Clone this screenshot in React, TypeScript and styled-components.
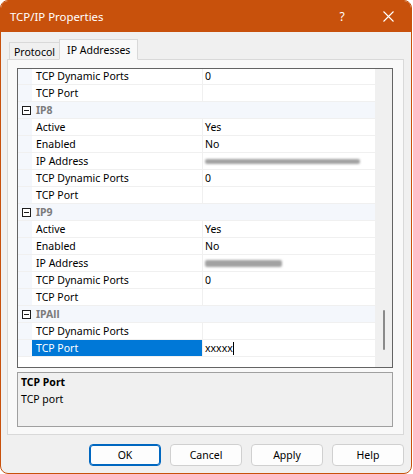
import React from "react"
import styled, { createGlobalStyle } from "styled-components"

const GlobalStyle = createGlobalStyle`
  html, body {
    margin: 0;
    padding: 0;
    background: #ffffff;
  }
  * {
    box-sizing: border-box;
  }
`

const FONT = `"Noto Sans", "Open Sans", "Liberation Sans", sans-serif`

const Window = styled.div`
  width: 412px;
  height: 474px;
  border: 1px solid #c8510c;
  border-radius: 8px;
  background: #f0f0f0;
  display: flex;
  flex-direction: column;
  overflow: hidden;
  font-family: ${FONT};
  font-size: 10.5px;
  color: #000;
`

const TitleBar = styled.div`
  height: 31px;
  flex: none;
  background: #c8510c;
  color: #fff;
  display: flex;
  align-items: center;
  padding-left: 9px;
`

const Title = styled.span`
  flex: 1;
  font-size: 11.4px;
`

const TitleButton = styled.div`
  width: 46px;
  height: 31px;
  display: flex;
  align-items: center;
  justify-content: center;
  font-size: 12px;
`

const Body = styled.div`
  flex: 1;
  display: flex;
  flex-direction: column;
  padding: 7px 7px 0 6px;
`

const TabStrip = styled.div`
  height: 21px;
  display: flex;
  align-items: flex-end;
  padding-left: 2px;
  margin-bottom: -1px;
  position: relative;
  z-index: 1;
`

const Tab = styled.div<{ $active?: boolean }>`
  height: ${p => (p.$active ? "21px" : "17px")};
  margin-bottom: ${p => (p.$active ? "0" : "1px")};
  padding: 0 ${p => (p.$active ? "7px" : "4px")};
  border: 1px solid #d9d9d9;
  border-bottom: ${p => (p.$active ? "1px solid #f9f9f9" : "none")};
  margin-left: ${p => (p.$active ? "-1px" : "0")};
  background: ${p => (p.$active ? "#f9f9f9" : "#f0f0f0")};
  display: flex;
  align-items: center;
  padding-top: ${p => (p.$active ? "0" : "1px")};
`

const Panel = styled.div`
  width: 397px;
  height: 376px;
  border: 1px solid #d9d9d9;
  background: #f9f9f9;
  padding: 8px 10px 0 9px;
  display: flex;
  flex-direction: column;
  gap: 4px;
`

const Grid = styled.div`
  width: 376px;
  height: 300px;
  border: 1px solid #646464;
  background: #fff;
  display: flex;
  overflow: hidden;
`

const Rows = styled.div`
  width: 357px;
  margin-top: -1px;
  display: flex;
  flex-direction: column;
`

const Row = styled.div`
  height: 17px;
  flex: none;
  display: flex;
  border-bottom: 1px solid #f0f0f0;
`

const Gutter = styled.div`
  width: 14px;
  flex: none;
  background: #f4f7fc;
`

const NameCell = styled.div<{ $selected?: boolean }>`
  width: 171px;
  flex: none;
  padding-left: 4px;
  line-height: 16px;
  white-space: nowrap;
  background: ${p => (p.$selected ? "#0078d7" : "#fff")};
  color: ${p => (p.$selected ? "#fff" : "#000")};
  border-right: 1px solid #f0f0f0;
`

const ValueCell = styled.div`
  flex: 1;
  padding-left: 2px;
  line-height: 16px;
  white-space: nowrap;
  display: flex;
  align-items: center;
`

const CategoryRow = styled.div`
  height: 17px;
  flex: none;
  display: flex;
  align-items: center;
  background: #f4f7fc;
  border-bottom: 1px solid #f0f0f0;
`

const Toggle = styled.div`
  width: 14px;
  display: flex;
  justify-content: center;
  padding-left: 2px;
`

const CategoryName = styled.span`
  padding-left: 4px;
  font-weight: 700;
  color: #7c7c7c;
  line-height: 16px;
`

const Redacted = styled.div<{ $w: number; $h: number }>`
  width: ${p => p.$w}px;
  height: ${p => p.$h}px;
  margin-top: 1px;
  background: #a2a2a2;
  border-radius: 2px;
  filter: blur(0.8px);
`

const Editing = styled.span`
  display: inline-flex;
  align-items: center;
`

const Caret = styled.span`
  display: inline-block;
  width: 1px;
  height: 13px;
  background: #000;
`

const ScrollTrack = styled.div`
  width: 17px;
  flex: none;
  background: #f0f0f0;
  display: flex;
  justify-content: center;
  padding-top: 241px;
`

const ScrollThumb = styled.div`
  width: 2px;
  height: 40px;
  background: #8b8b8b;
  border-radius: 1px;
`

const Description = styled.div`
  width: 376px;
  height: 55px;
  border: 1px solid #a0a0a0;
  background: #f0f0f0;
  padding: 1px 3px;
  line-height: 17px;
`

const DescTitle = styled.div`
  font-weight: 700;
`

const ButtonBar = styled.div`
  display: flex;
  justify-content: flex-end;
  gap: 9px;
  padding-top: 9px;
`

const Button = styled.button<{ $default?: boolean }>`
  width: 72px;
  height: 22px;
  font-family: ${FONT};
  font-size: 10.5px;
  color: #000;
  background: #fdfdfd;
  border: 1px solid ${p => (p.$default ? "#0067c0" : "#d0d0d0")};
  box-shadow: ${p => (p.$default ? "inset 0 0 0 1px #0067c0" : "none")};
  border-radius: 4px;
  padding: 0;
`

type Item =
  | { kind: "cat"; name: string }
  | { kind: "prop"; name: string; value?: string; redact?: [number, number]; selected?: boolean }

const items: Item[] = [
  { kind: "prop", name: "TCP Dynamic Ports", value: "0" },
  { kind: "prop", name: "TCP Port" },
  { kind: "cat", name: "IP8" },
  { kind: "prop", name: "Active", value: "Yes" },
  { kind: "prop", name: "Enabled", value: "No" },
  { kind: "prop", name: "IP Address", redact: [155, 5] },
  { kind: "prop", name: "TCP Dynamic Ports", value: "0" },
  { kind: "prop", name: "TCP Port" },
  { kind: "cat", name: "IP9" },
  { kind: "prop", name: "Active", value: "Yes" },
  { kind: "prop", name: "Enabled", value: "No" },
  { kind: "prop", name: "IP Address", redact: [77, 7] },
  { kind: "prop", name: "TCP Dynamic Ports", value: "0" },
  { kind: "prop", name: "TCP Port" },
  { kind: "cat", name: "IPAll" },
  { kind: "prop", name: "TCP Dynamic Ports" },
  { kind: "prop", name: "TCP Port", selected: true },
]

const MinusBox = () => (
  <svg width="9" height="9" viewBox="0 0 9 9">
    <rect x="0.5" y="0.5" width="8" height="8" fill="#fff" stroke="#1e1e1e" />
    <line x1="2" y1="4.5" x2="7" y2="4.5" stroke="#1e1e1e" />
  </svg>
)

const CloseIcon = () => (
  <svg width="11" height="11" viewBox="0 0 11 11">
    <path d="M0.5 0.5 L10.5 10.5 M10.5 0.5 L0.5 10.5" stroke="#fff" strokeWidth="1.1" />
  </svg>
)

const App = () => {
  return (
    <>
      <GlobalStyle />
      <Window>
        <TitleBar>
          <Title>TCP/IP Properties</Title>
          <TitleButton>?</TitleButton>
          <TitleButton>
            <CloseIcon />
          </TitleButton>
        </TitleBar>
        <Body>
          <TabStrip>
            <Tab>Protocol</Tab>
            <Tab $active>IP Addresses</Tab>
          </TabStrip>
          <Panel>
            <Grid>
              <Rows>
                {items.map((item, i) =>
                  item.kind === "cat" ? (
                    <CategoryRow key={i}>
                      <Toggle>
                        <MinusBox />
                      </Toggle>
                      <CategoryName>{item.name}</CategoryName>
                    </CategoryRow>
                  ) : (
                    <Row key={i}>
                      <Gutter />
                      <NameCell $selected={item.selected}>{item.name}</NameCell>
                      <ValueCell>
                        {item.redact ? (
                          <Redacted $w={item.redact[0]} $h={item.redact[1]} />
                        ) : item.selected ? (
                          <Editing>
                            xxxxx
                            <Caret />
                          </Editing>
                        ) : (
                          item.value
                        )}
                      </ValueCell>
                    </Row>
                  )
                )}
              </Rows>
              <ScrollTrack>
                <ScrollThumb />
              </ScrollTrack>
            </Grid>
            <Description>
              <DescTitle>TCP Port</DescTitle>
              <div>TCP port</div>
            </Description>
          </Panel>
          <ButtonBar>
            <Button $default>OK</Button>
            <Button>Cancel</Button>
            <Button>Apply</Button>
            <Button>Help</Button>
          </ButtonBar>
        </Body>
      </Window>
    </>
  )
}

export default App
